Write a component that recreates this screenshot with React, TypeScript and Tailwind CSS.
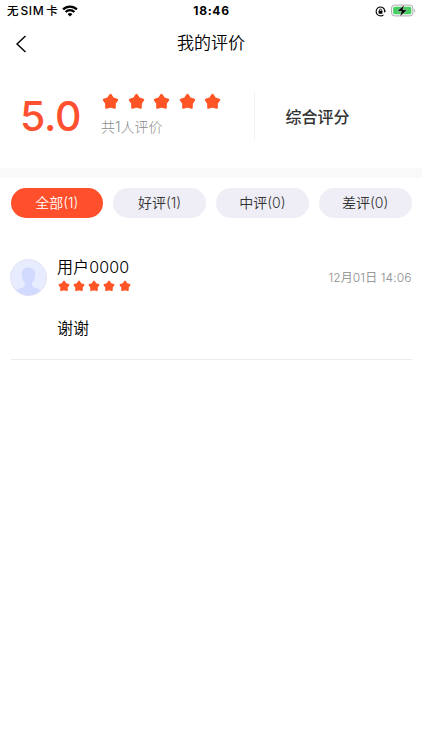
const tabs = [
  { label: "全部(1)", active: true },
  { label: "好评(1)", active: false },
  { label: "中评(0)", active: false },
  { label: "差评(0)", active: false },
];

function Star({ className }: { className: string }) {
  return (
    <svg viewBox="0 0 24 24" className={className} fill="#ff5526" stroke="#ff5526" strokeWidth="3.2" strokeLinejoin="round">
      <path d="M12 2.8L15.7 7.9L21.3 9.7L17.9 14.7L17.9 20.7L12 19L6.1 20.7L6.1 14.7L2.7 9.7L8.3 7.9Z" />
    </svg>
  );
}

function Stars({ className, starClassName }: { className: string; starClassName: string }) {
  return (
    <div className={`flex ${className}`}>
      {[1, 2, 3, 4, 5].map((n) => (
        <Star key={n} className={starClassName} />
      ))}
    </div>
  );
}

function StatusBar() {
  return (
    <div className="grid h-[22px] grid-cols-3 items-center pl-[7px] pr-[6px] text-black">
      <div className="flex items-center text-[11.5px] font-medium leading-none">
        <span className="mt-px">无</span>
        <span className="ml-[2px] text-[12px] tracking-[0.6px]">SIM</span>
        <span className="ml-[2px] mt-px">卡</span>
        <svg viewBox="0 0 16 12" className="mb-px ml-[4px] h-[12px] w-[16px]" fill="none" stroke="#000" strokeWidth="2.2">
          <path d="M1.1 4.4a9.8 9.8 0 0 1 13.8 0" />
          <path d="M3.6 7a6.2 6.2 0 0 1 8.8 0" />
          <path d="M8 11.6L5.6 9.2a3.4 3.4 0 0 1 4.8 0z" fill="#000" stroke="none" />
        </svg>
      </div>
      <div className="text-center text-[12px] font-bold leading-none tracking-[0.7px]">18:46</div>
      <div className="flex items-center justify-end gap-[5px]">
        <svg viewBox="0 0 12 12" className="h-[11px] w-[11px]" fill="none" stroke="#000" strokeWidth="1.2">
          <path d="M9.2 9.6A4.8 4.8 0 1 1 10.8 5.4" />
          <path d="M9.3 5.3h2.7L10.7 7.4z" fill="#000" stroke="none" />
          <path d="M4.8 5.5v-.9a1.2 1.2 0 0 1 2.4 0v.9" strokeWidth="0.9" />
          <rect x="3.9" y="5.3" width="4.2" height="3.2" rx="0.5" fill="#000" stroke="none" />
        </svg>
        <svg viewBox="0 0 25 13" className="mb-px h-[13px] w-[25px]" fill="none">
          <rect x="0.6" y="1.1" width="21.3" height="10.8" rx="3" stroke="#aaa" />
          <rect x="2.2" y="2.7" width="18.1" height="7.6" rx="1.6" fill="#43cf61" />
          <path d="M23.2 4.8v3.6c1.4-.6 1.4-3 0-3.6z" fill="#aaa" />
          <path d="M13.4 0.8L6 7.3h4.5L8.8 12.4l7.6-6.6h-4.6z" fill="#000" stroke="#fff" strokeWidth="0.4" />
        </svg>
      </div>
    </div>
  );
}

function Avatar() {
  return (
    <svg viewBox="0 0 37 37" className="h-[37px] w-[37px] shrink-0">
      <defs>
        <clipPath id="avatar">
          <circle cx="18.5" cy="18.5" r="18" />
        </clipPath>
      </defs>
      <circle cx="18.5" cy="18.5" r="18" fill="#e8ecff" />
      <g clipPath="url(#avatar)" fill="#d0dbff">
        <path d="M18.5 8.6c4.6 0 7 2.9 6.7 7.2-.2 3.8-1.2 6.5-3 8v2.6c0 1.3 1.5 1.7 3.9 2.5 2.7.9 4.7 1.6 5.6 3.6V38H5.3v-5.5c.9-2 2.9-2.7 5.6-3.6 2.4-.8 3.9-1.2 3.9-2.5v-2.6c-1.8-1.5-2.8-4.2-3-8-.3-4.3 2.1-7.2 6.7-7.2z" />
      </g>
      <circle cx="18.5" cy="18.5" r="18" fill="none" stroke="#e2dcef" strokeWidth="0.8" />
    </svg>
  );
}

export default function App() {
  return (
    <div className="h-[750px] w-full overflow-hidden bg-white font-['Inter','Noto_Sans_CJK_SC',sans-serif]">
      <StatusBar />

      <nav className="grid h-[42px] grid-cols-[40px_1fr_40px] items-center">
        <svg viewBox="0 0 12 18" className="ml-[15px] mt-px h-[18px] w-[12px]" fill="none" stroke="#000" strokeWidth="1.4">
          <path d="M10.5 1L2 9l8.5 8" />
        </svg>
        <h1 className="text-center text-[17px] font-[350] leading-none text-black">我的评价</h1>
      </nav>

      <section className="flex h-[104px] items-center">
        <div className="w-[102px] pl-[20px] text-[41px] font-medium leading-none tracking-[-0.3px] text-[#ff5030]">5.0</div>
        <div className="flex h-[50px] w-[152px] flex-col">
          <Stars className="mt-[1.5px] gap-[8.5px]" starClassName="h-[17px] w-[17px]" />
          <p className="-ml-px mt-[9px] text-[14px] font-light leading-[16px] text-[#8c8c8c]">共1人评价</p>
        </div>
        <div className="h-[50px] w-px bg-[#f3f3f3]" />
        <h2 className="ml-[30.5px] pt-px text-[16px] font-medium leading-none text-[#333]">综合评分</h2>
      </section>

      <div className="h-[10px] bg-[#f9f9f9]" />

      <div className="flex gap-[10px] px-[10.5px] pt-[10px]">
        {tabs.map((tab) => (
          <button
            key={tab.label}
            className={
              tab.active
                ? "h-[30px] flex-1 rounded-full bg-[#ff4f2b] text-[14px] font-[350] leading-none text-white"
                : "h-[30px] flex-1 rounded-full bg-[#efeef6] text-[14px] font-[350] leading-none text-[#333]"
            }
          >
            {tab.label}
          </button>
        ))}
      </div>

      <article className="mx-[10.5px] mt-[40px] flex h-[102px] border-b border-[#ececec]">
        <div className="-ml-[0.5px] pt-px">
          <Avatar />
        </div>
        <div className="ml-[10px] flex-1">
          <div className="text-[16px] font-[350] leading-[18px] tracking-[0.1px] text-black">用户0000</div>
          <Stars className="ml-[0.5px] mt-[4px] gap-[3.3px]" starClassName="h-[12px] w-[12px]" />
          <p className="mt-[26px] text-[16px] font-[350] leading-[20px] text-black">谢谢</p>
        </div>
        <time className="mt-[12px] text-[12px] font-[350] leading-[16px] tracking-[0.1px] text-[#8c8c8c]">12月01日 14:06</time>
      </article>
    </div>
  );
}
